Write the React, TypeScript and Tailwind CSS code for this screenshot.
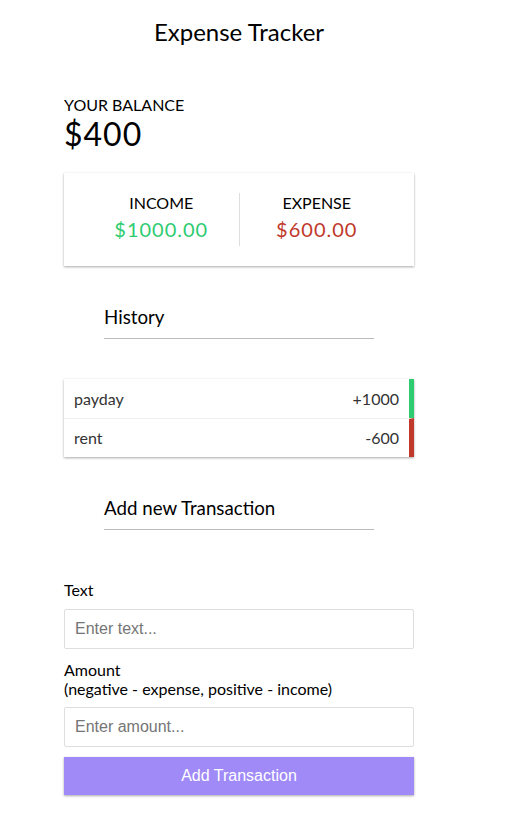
import React from "react";

const shadow = "shadow-[0_1px_3px_rgba(0,0,0,0.12),0_1px_2px_rgba(0,0,0,0.24)]";

export default function App() {
  return (
    <div className="min-h-[838px] bg-white text-black font-['Lato','Noto_Sans',sans-serif]">
      <div className="w-[350px] ml-[64px] pt-[17px]">
        <h2 className="text-center text-[24px] leading-[29px]">Expense Tracker</h2>

        <h4 className="mt-[49px] text-[16px] leading-[19px] uppercase">Your Balance</h4>
        <h1 className="text-[32px] leading-[40px] tracking-[1px]">$400</h1>

        <div className={`mt-[19px] flex bg-white p-[20px] ${shadow}`}>
          <div className="flex-1 text-center border-r border-[#dedede]">
            <h4 className="text-[16px] leading-[19px] uppercase">Income</h4>
            <p className="my-[5px] text-[20px] leading-[24px] tracking-[1px] text-[#2ecc71]">$1000.00</p>
          </div>
          <div className="flex-1 text-center">
            <h4 className="text-[16px] leading-[19px] uppercase">Expense</h4>
            <p className="my-[5px] text-[20px] leading-[24px] tracking-[1px] text-[#c0392b]">$600.00</p>
          </div>
        </div>

        <h3 className="mt-[40px] mx-[40px] text-[18.72px] leading-[22px] pb-[10px] border-b border-[#bbb]">History</h3>

        <ul className={`mt-[40px] bg-white ${shadow}`}>
          <li className="h-[39px] flex items-center justify-between pl-[10px] pr-[10px] text-[16px] text-[#333] border-r-[5px] border-[#2ecc71]">
            <span>payday</span>
            <span>+1000</span>
          </li>
          <li className="h-[39px] flex items-center justify-between pl-[10px] pr-[10px] text-[16px] text-[#333] border-r-[5px] border-r-[#c0392b] border-t border-t-[#f0f0f0]">
            <span>rent</span>
            <span>-600</span>
          </li>
        </ul>

        <h3 className="mt-[40px] mx-[40px] text-[18.72px] leading-[22px] pb-[10px] border-b border-[#bbb]">Add new Transaction</h3>

        <form className="mt-[50px]" onSubmit={(e) => e.preventDefault()}>
          <label className="block text-[16px] leading-[19px]">Text</label>
          <input
            type="text"
            placeholder="Enter text..."
            className="mt-[10px] block w-full h-[40px] px-[10px] border border-[#dedede] rounded-[2px] text-[16px] font-['Liberation_Sans',Arial,sans-serif] placeholder:text-[#757575] outline-none"
          />
          <label className="block mt-[11px] text-[16px] leading-[19px]">
            Amount
            <br />
            (negative - expense, positive - income)
          </label>
          <input
            type="text"
            placeholder="Enter amount..."
            className="mt-[9px] block w-full h-[40px] px-[10px] border border-[#dedede] rounded-[2px] text-[16px] font-['Liberation_Sans',Arial,sans-serif] placeholder:text-[#757575] outline-none"
          />
          <button
            type="submit"
            className={`mt-[10px] block w-full h-[38px] bg-[#a08af8] text-white text-[16px] font-['Liberation_Sans',Arial,sans-serif] ${shadow}`}
          >
            Add Transaction
          </button>
        </form>
      </div>
    </div>
  );
}
